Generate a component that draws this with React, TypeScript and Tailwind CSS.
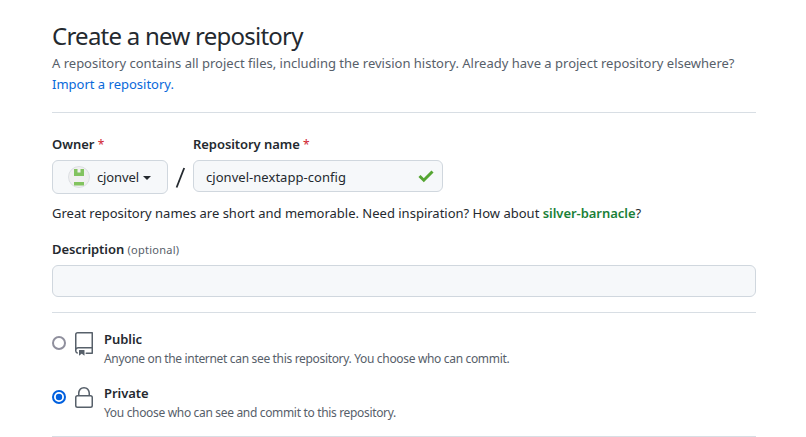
import React from "react";

function RepoIcon() {
  return (
    <svg viewBox="0 0 24 24" className="h-6 w-6 fill-[#57606a]">
      <path d="M3 2.75A2.75 2.75 0 015.75 0h14.5a.75.75 0 01.75.75v20.5a.75.75 0 01-.75.75h-6a.75.75 0 010-1.5h5.25v-4H6A1.5 1.5 0 004.5 18v.75c0 .716.43 1.334 1.05 1.605a.75.75 0 01-.6 1.374A3.25 3.25 0 013 18.75v-16zM19.5 1.5H5.75c-.69 0-1.25.56-1.25 1.25v12.651A2.989 2.989 0 016 15h13.5V1.5z" fillRule="evenodd" />
      <path d="M7 18.25a.25.25 0 01.25-.25h5a.25.25 0 01.25.25v5.01a.25.25 0 01-.397.201l-2.206-1.604a.25.25 0 00-.294 0L7.397 23.46a.25.25 0 01-.397-.2v-5.01z" />
    </svg>
  );
}

function LockIcon() {
  return (
    <svg viewBox="0 0 24 24" className="h-6 w-6 fill-[#57606a]">
      <path fillRule="evenodd" d="M6 9V7.25C6 3.845 8.503 1 12 1s6 2.845 6 6.25V9h.5a2.5 2.5 0 012.5 2.5v8a2.5 2.5 0 01-2.5 2.5h-13A2.5 2.5 0 013 19.5v-8A2.5 2.5 0 015.5 9H6zm1.5-1.75C7.5 4.58 9.422 2.5 12 2.5c2.578 0 4.5 2.08 4.5 4.75V9h-9V7.25zm-3 4.25a1 1 0 011-1h13a1 1 0 011 1v8a1 1 0 01-1 1h-13a1 1 0 01-1-1v-8z" />
    </svg>
  );
}

function Avatar() {
  return (
    <svg viewBox="0 0 22 22" className="h-[22px] w-[22px]">
      <circle cx="11" cy="11" r="10.5" fill="#f0f0f0" stroke="#dcdfe3" />
      <path d="M6 3h3.5v3.5h3V3H16v7H6zM6 16h10v3.5H6z" fill="#82c35f" />
    </svg>
  );
}

function Radio({ checked }: { checked?: boolean }) {
  return (
    <svg viewBox="0 0 14 14" className="h-3.5 w-3.5">
      <circle cx="7" cy="7" r="6" fill="#fff" stroke={checked ? "#0060df" : "#8f8f9d"} strokeWidth="2" />
      {checked && <circle cx="7" cy="7" r="3.2" fill="#0060df" />}
    </svg>
  );
}

type VisibilityProps = { title: string; note: string; icon: React.ReactNode; checked?: boolean };

function Visibility({ title, note, icon, checked }: VisibilityProps) {
  return (
    <label className="flex h-[54px] items-start">
      <span className="mt-1">
        <Radio checked={checked} />
      </span>
      <span className="ml-1.5">{icon}</span>
      <span className="-mt-px ml-2 block whitespace-nowrap">
        <span className="block text-[13px] font-semibold leading-[17px] tracking-[-0.05px]">{title}</span>
        <span className="block text-[12px] leading-[21px] tracking-[-0.33px] text-[#57606a]">{note}</span>
      </span>
    </label>
  );
}

function Required() {
  return <span className="text-[12px] font-normal text-[#cf222e]">*</span>;
}

export default function App() {
  return (
    <main className="h-[437px] w-[806px] overflow-hidden bg-white pl-[52px] pr-[50px] pt-5 font-['Noto_Sans',sans-serif] text-[13px] text-[#24292f]">
      <header className="h-[93px] border-b border-[#d8dee4]">
        <h1 className="whitespace-nowrap text-[24px] leading-[31px] tracking-[-0.75px]">Create a new repository</h1>
        <p className="mt-0.5 whitespace-nowrap leading-[21px] text-[#57606a]">
          A repository contains all project files, including the revision history. Already have a project repository elsewhere?
        </p>
        <a className="block leading-[21px] text-[#0969da]">Import a repository.</a>
      </header>

      <section className="flex pt-[21px]">
        <div>
          <div className="h-5 font-semibold leading-5 tracking-[-0.03px]">Owner <Required /></div>
          <button className="mt-1.5 flex h-[34px] w-[116px] items-center rounded-md border border-[#d0d7de] bg-[#f6f8fa] pl-[15px]">
            <Avatar />
            <span className="ml-[7px] pt-px text-[13px] tracking-[-0.12px]">cjonvel</span>
            <span className="ml-1 mt-0.5 border-x-4 border-t-4 border-x-transparent border-t-[#24292f]" />
          </button>
        </div>
        <svg className="ml-[7px] mt-[26px] h-[34px] w-[11px]" viewBox="0 0 11 34">
          <path d="M9.2 8L1.6 27.5" stroke="#24292f" strokeWidth="1.8" />
        </svg>
        <div className="ml-[7px]">
          <div className="h-5 font-semibold leading-5 tracking-[-0.06px]">Repository name <Required /></div>
          <div className="mt-1.5 flex h-8 w-[250px] items-center justify-between rounded-md border border-[#d0d7de] bg-[#f6f8fa] pl-3 pr-2">
            <span className="pt-[3px] tracking-[0.04px]">cjonvel-nextapp-config</span>
            <svg viewBox="0 0 16 14" className="h-3.5 w-4">
              <path d="M1.5 7l4.3 4.2L14.5 2.5" fill="none" stroke="#55a532" strokeWidth="3" />
            </svg>
          </div>
        </div>
      </section>

      <p className="mt-[9px] whitespace-nowrap leading-5">
        Great repository names are short and memorable. Need inspiration? How about <b className="font-semibold tracking-[-0.04px] text-[#1a7f37]">silver-barnacle</b>?
      </p>

      <div className="mt-4 h-5 leading-5">
        <span className="font-semibold tracking-[-0.06px]">Description</span> <span className="text-[11px] tracking-[0.25px] text-[#57606a]">(optional)</span>
      </div>
      <div className="mt-1.5 h-8 rounded-md border border-[#d0d7de] bg-[#f6f8fa]" />

      <section className="mt-[15px] h-[125px] border-y border-[#d8dee4] pt-[19px]">
        <Visibility title="Public" note="Anyone on the internet can see this repository. You choose who can commit." icon={<RepoIcon />} />
        <Visibility title="Private" note="You choose who can see and commit to this repository." icon={<LockIcon />} checked />
      </section>
    </main>
  );
}
